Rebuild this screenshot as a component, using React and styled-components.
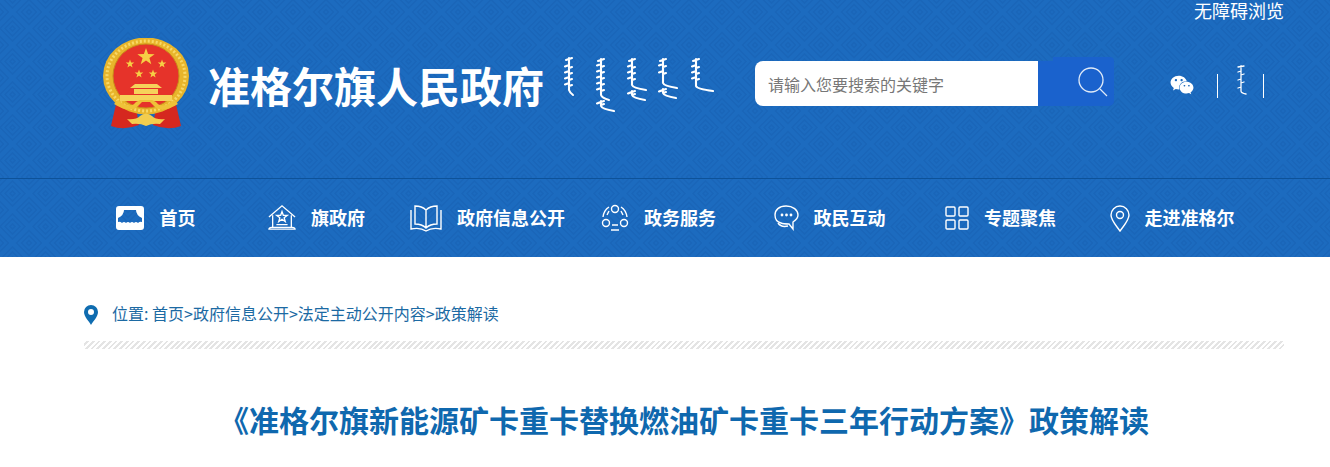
import styled, { createGlobalStyle } from "styled-components";
import { FaWeixin } from "react-icons/fa";

const CJK = `"Noto Sans CJK SC", "Liberation Sans", sans-serif`;

const diamonds = [2.5, 7.5, 12.5]
  .map((r) =>
    [[16.5, 16.5], [0, 0], [33, 0], [0, 33], [33, 33]]
      .map(([x, y]) => `<path d='M${x - r} ${y}L${x} ${y - r}L${x + r} ${y}L${x} ${y + r}Z'/>`)
      .join("")
  )
  .join("");
const tile = `<svg xmlns='http://www.w3.org/2000/svg' width='33' height='33'><g fill='none' stroke='#0d4f9f' stroke-opacity='.2' stroke-width='1.6'>${diamonds}</g></svg>`;

const GlobalStyle = createGlobalStyle`
  html, body {
    margin: 0;
    padding: 0;
    background: #fff;
    font-family: ${CJK};
  }
`;

const Header = styled.header`
  height: 257px;
  background-color: #1c6bbf;
  background-image: url("data:image/svg+xml,${encodeURIComponent(tile)}");
  background-position: -4.5px 11.5px;
  color: #fff;
`;

const TopBand = styled.div`
  height: 178px;
  border-bottom: 1px solid #0d5299;
`;

const AccessRow = styled.div`
  height: 20px;
  padding-right: 46px;
  text-align: right;
  font-size: 18px;
  line-height: 20px;
`;

const BrandRow = styled.div`
  display: flex;
  align-items: center;
  height: 92px;
  margin-top: 18px;
  padding-left: 102px;
`;

const Emblem = styled.svg`
  width: 88px;
  height: 92px;
  flex: none;
`;

const SiteName = styled.h1`
  margin: 2px 0 0 18px;
  font-size: 42px;
  line-height: 50px;
  font-weight: 700;
  white-space: nowrap;
`;

const ScriptMark = styled.svg`
  flex: none;
  width: 156px;
  height: 60px;
  margin: 2px 0 0 17px;
`;

const Search = styled.form`
  display: flex;
  margin: 0 0 1px 38px;
`;

const SearchInput = styled.input`
  box-sizing: border-box;
  width: 283px;
  height: 45px;
  padding: 0 13px;
  border: 0;
  border-radius: 8px 0 0 8px;
  outline: 0;
  background: #fff;
  font: 16px ${CJK};
  &::placeholder {
    color: #777;
    opacity: 1;
  }
`;

const SearchButton = styled.button`
  position: relative;
  width: 76px;
  height: 45px;
  padding: 0;
  border: 0;
  border-radius: 0 0 5px 0;
  background: #1a62cd;
  &::before {
    content: "";
    position: absolute;
    top: -4px;
    left: 15px;
    right: 0;
    height: 4px;
    border-radius: 0 5px 0 0;
    background: #1a62cd;
  }
  svg {
    position: absolute;
    top: 5px;
    left: 40px;
  }
`;

const Tools = styled.div`
  display: flex;
  align-items: center;
  margin-left: 33px;
  padding-top: 4px;
`;

const ToolCell = styled.div`
  display: flex;
  justify-content: center;
  align-items: center;
  width: ${(p) => p.$w}px;
  height: 24px;
  border-right: 1px solid #fff;
  svg {
    display: block;
    flex: none;
    margin-top: ${(p) => p.$lift}px;
  }
`;

const Nav = styled.nav`
  display: grid;
  grid-template-columns: repeat(7, 171px);
  height: 76px;
  padding: 0 0 2px 60px;
`;

const NavItem = styled.a`
  display: flex;
  justify-content: center;
  align-items: center;
  gap: ${(p) => p.$gap}px;
  padding-left: ${(p) => p.$pad}px;
  font-size: 18px;
  font-weight: 700;
  color: #fff;
  white-space: nowrap;
  svg {
    flex: none;
    margin-top: 2px;
    fill: none;
    stroke: #fff;
    stroke-width: 1.4;
  }
`;

const Main = styled.main`
  padding: 0 46px 0 84px;
`;

const Crumbs = styled.div`
  display: flex;
  align-items: center;
  gap: 14px;
  height: 56px;
  padding-top: 28px;
  font-size: 16px;
  color: #1c6aa3;
  svg {
    flex: none;
    margin-top: 4px;
  }
`;

const Hatch = styled.div`
  height: 8px;
  background: repeating-linear-gradient(135deg, #fff 0 2px, #e4e4e4 2px 4px);
`;

const Title = styled.h2`
  margin: 48px 0 0;
  font-size: 30px;
  line-height: 44px;
  font-weight: 700;
  text-align: center;
  color: #0f68ae;
  white-space: nowrap;
`;

const star = (cx, cy, r) =>
  Array.from({ length: 10 }, (_, i) => {
    const a = (-90 + i * 36) * (Math.PI / 180);
    const d = i % 2 ? r * 0.4 : r;
    return `${(cx + d * Math.cos(a)).toFixed(1)},${(cy + d * Math.sin(a)).toFixed(1)}`;
  }).join(" ");

const NationalEmblem = () => (
  <Emblem viewBox="0 0 88 92">
    <path d="M15 62 L9 88 Q22 93 37 87 L34 70 Z" fill="#d5281f" />
    <path d="M73 62 L79 88 Q66 93 51 87 L54 70 Z" fill="#d5281f" />
    <ellipse cx="44" cy="38" rx="43" ry="38.5" fill="#e8b52b" />
    <ellipse cx="44" cy="38" rx="39" ry="35" fill="none" stroke="#f8d866" strokeWidth="3" strokeDasharray="2 2" />
    <ellipse cx="44" cy="38" rx="33" ry="32" fill="#e6332a" stroke="#c98a1a" strokeWidth="1" />
    <polygon points={star(44, 19, 9)} fill="#f6cf45" />
    <polygon points={star(28, 26, 4.5)} fill="#f6cf45" />
    <polygon points={star(60, 26, 4.5)} fill="#f6cf45" />
    <polygon points={star(37, 36, 4.5)} fill="#f6cf45" />
    <polygon points={star(51, 36, 4.5)} fill="#f6cf45" />
    <path d="M28 50 H60 L55 46 H33 Z M32 51 H56 V56 H32 Z" fill="#f6d25a" />
    <rect x="18" y="57" width="52" height="6" fill="#f6d25a" />
    <path d="M12 66 Q28 76 36 68 L40 64 H48 L52 68 Q60 76 76 66 L72 62 Q60 72 54 64 L50 62 H38 L34 64 Q28 72 16 62 Z" fill="#efc238" />
    <path d="M25 81 Q34 82 38 78 Q44 73 50 78 Q54 82 63 81 L58 86 Q50 85 44 88 Q38 85 30 86 Z" fill="#f3cd4e" />
  </Emblem>
);

// one stroke of the wordmark: a spine with teeth, ending in a tail to the right
const scriptColumn = ({ x, top, h, teeth, tail }) => {
  const marks = teeth.map((y) => `M${x} ${top + y}l-4 1.5M${x} ${top + y + 3}l3 -1`).join("");
  const foot = top + h;
  return `M${x - 3} ${top + 2}l6 -2M${x} ${top}V${foot}Q${x + 1} ${foot + 3} ${x + tail} ${foot + 5}${marks}`;
};

const wordmark = [
  { x: 8, top: 3, h: 32, teeth: [7, 13, 19, 25], tail: 4 },
  { x: 40, top: 4, h: 36, teeth: [5, 11, 17, 23, 29], tail: 8 },
  { x: 40, top: 46, h: 5, teeth: [1], tail: 13 },
  { x: 71, top: 4, h: 26, teeth: [6, 12, 18], tail: 14 },
  { x: 71, top: 36, h: 4, teeth: [1], tail: 13 },
  { x: 102, top: 4, h: 24, teeth: [5, 12], tail: 14 },
  { x: 102, top: 34, h: 4, teeth: [1], tail: 13 },
  { x: 135, top: 4, h: 27, teeth: [6, 12, 18], tail: 17 },
];

const ScriptLogo = () => (
  <ScriptMark viewBox="0 0 156 60" aria-hidden="true">
    <path
      d={wordmark.map(scriptColumn).join("")}
      fill="none"
      stroke="#fff"
      strokeWidth="2.1"
      strokeLinecap="round"
    />
  </ScriptMark>
);

const HomeIcon = () => (
  <svg width="28" height="24" viewBox="0 0 28 24" style={{ stroke: "none" }}>
    <path
      fillRule="evenodd"
      d="M3 0H25Q28 0 28 3V21Q28 24 25 24H3Q0 24 0 21V3Q0 0 3 0ZM8 4H20Q20 9 26 12V16Q24 15 22 17Q20 15 18 17Q16 15 14 17Q12 15 10 17Q8 15 6 17Q4 15 2 16V12Q8 9 8 4Z"
      fill="#fff"
    />
  </svg>
);

const HallIcon = () => (
  <svg width="28" height="28" viewBox="0 0 30 28">
    <path d="M1 13 L15 1 L29 13 M5 11 V24 M25 11 V24 M1 26 H29 Q29 24 26 24 H4 Q1 24 1 26Z M9 21 H21" />
    <polygon points={star(15, 13, 6)} />
  </svg>
);

const BookIcon = () => (
  <svg width="32" height="27" viewBox="0 0 32 27">
    <path d="M16 5 Q12 1 5 1 V19 Q12 19 16 23 Q20 19 27 19 V1 Q20 1 16 5 Z M16 5 V23 M1 5 V24 Q10 22 16 26 Q22 22 31 24 V5" />
  </svg>
);

const ServiceIcon = () => (
  <svg width="28" height="28" viewBox="0 0 28 28">
    <circle cx="14" cy="5" r="3.5" />
    <circle cx="5" cy="19" r="3.5" />
    <circle cx="23" cy="19" r="3.5" />
    <path d="M8 3 Q3 6 2 13 M6 11 L8 7 M20 3 Q25 6 26 13 M22 11 L20 7 M10 26 H18 M11 21 H17" />
  </svg>
);

const ChatIcon = () => (
  <svg width="26" height="26" viewBox="0 0 26 26">
    <path d="M12 1 C5 1 1 5 1 10 C1 14 3 17 7 18 C9 19 13 19 15 19 L19 24 L19 17 C22 15 24 13 24 10 C24 5 19 1 12 1 Z" />
    <path d="M4 18 C6 21 10 22 14 21" />
    <circle cx="8" cy="10" r=".7" />
    <circle cx="12.5" cy="10" r=".7" />
    <circle cx="17" cy="10" r=".7" />
  </svg>
);

const TilesIcon = () => (
  <svg width="24" height="24" viewBox="0 0 24 24">
    <rect x="1" y="1" width="9" height="9" rx="1" />
    <rect x="14" y="1" width="9" height="9" rx="1" />
    <rect x="1" y="14" width="9" height="9" rx="1" />
    <rect x="14" y="14" width="9" height="9" rx="1" />
  </svg>
);

const PinIcon = () => (
  <svg width="22" height="27" viewBox="0 0 22 27">
    <path d="M11 26 C6 19 2 15 2 10 A9 9 0 0 1 20 10 C20 15 16 19 11 26 Z" />
    <circle cx="11" cy="10" r="3.5" />
  </svg>
);

const navItems = [
  { label: "首页", Icon: HomeIcon, pad: 20, gap: 16 },
  { label: "旗政府", Icon: HallIcon, pad: 0, gap: 15 },
  { label: "政府信息公开", Icon: BookIcon, pad: 0, gap: 15 },
  { label: "政务服务", Icon: ServiceIcon, pad: 0, gap: 15 },
  { label: "政民互动", Icon: ChatIcon, pad: 0, gap: 14 },
  { label: "专题聚焦", Icon: TilesIcon, pad: 0, gap: 15 },
  { label: "走进准格尔", Icon: PinIcon, pad: 0, gap: 14 },
];

export default function App() {
  return (
    <>
      <GlobalStyle />
      <Header>
        <TopBand>
          <AccessRow>无障碍浏览</AccessRow>
          <BrandRow>
            <NationalEmblem />
            <SiteName>准格尔旗人民政府</SiteName>
            <ScriptLogo />
            <Search onSubmit={(e) => e.preventDefault()}>
              <SearchInput placeholder="请输入您要搜索的关键字" />
              <SearchButton aria-label="搜索">
                <svg width="32" height="34" viewBox="0 0 32 34" fill="none" stroke="#dfeaf8" strokeWidth="1.3">
                  <circle cx="13" cy="14" r="12" />
                  <path d="M22 23 L29 30" />
                </svg>
              </SearchButton>
            </Search>
            <Tools>
              <ToolCell $w={70} $lift={-3}>
                <FaWeixin size={24} color="#fff" />
              </ToolCell>
              <ToolCell $w={45} $lift={-12}>
                <svg width="16" height="30" viewBox="0 0 16 30" fill="none" stroke="#fff" strokeWidth="1.3" strokeLinecap="round">
                  <path d="M5 2 l6 -1 M8 1 V26 Q8 28 13 29 M8 6 l-3 1 M8 10 l3 -1 M8 14 l-3 1 M8 18 l3 -1 M8 22 l-3 1" />
                </svg>
              </ToolCell>
            </Tools>
          </BrandRow>
        </TopBand>
        <Nav>
          {navItems.map(({ label, Icon, pad, gap }) => (
            <NavItem key={label} $pad={pad} $gap={gap}>
              <Icon />
              {label}
            </NavItem>
          ))}
        </Nav>
      </Header>
      <Main>
        <Crumbs>
          <svg width="14" height="20" viewBox="0 0 14 20">
            <path
              fillRule="evenodd"
              d="M7 0 A7 7 0 0 1 14 7 C14 12 9 16 7 20 C5 16 0 12 0 7 A7 7 0 0 1 7 0 Z M7 4 A3 3 0 1 0 7 10 A3 3 0 1 0 7 4 Z"
              fill="#0f6cb0"
            />
          </svg>
          <span>位置: 首页&gt;政府信息公开&gt;法定主动公开内容&gt;政策解读</span>
        </Crumbs>
        <Hatch />
        <Title>《准格尔旗新能源矿卡重卡替换燃油矿卡重卡三年行动方案》政策解读</Title>
      </Main>
    </>
  );
}
